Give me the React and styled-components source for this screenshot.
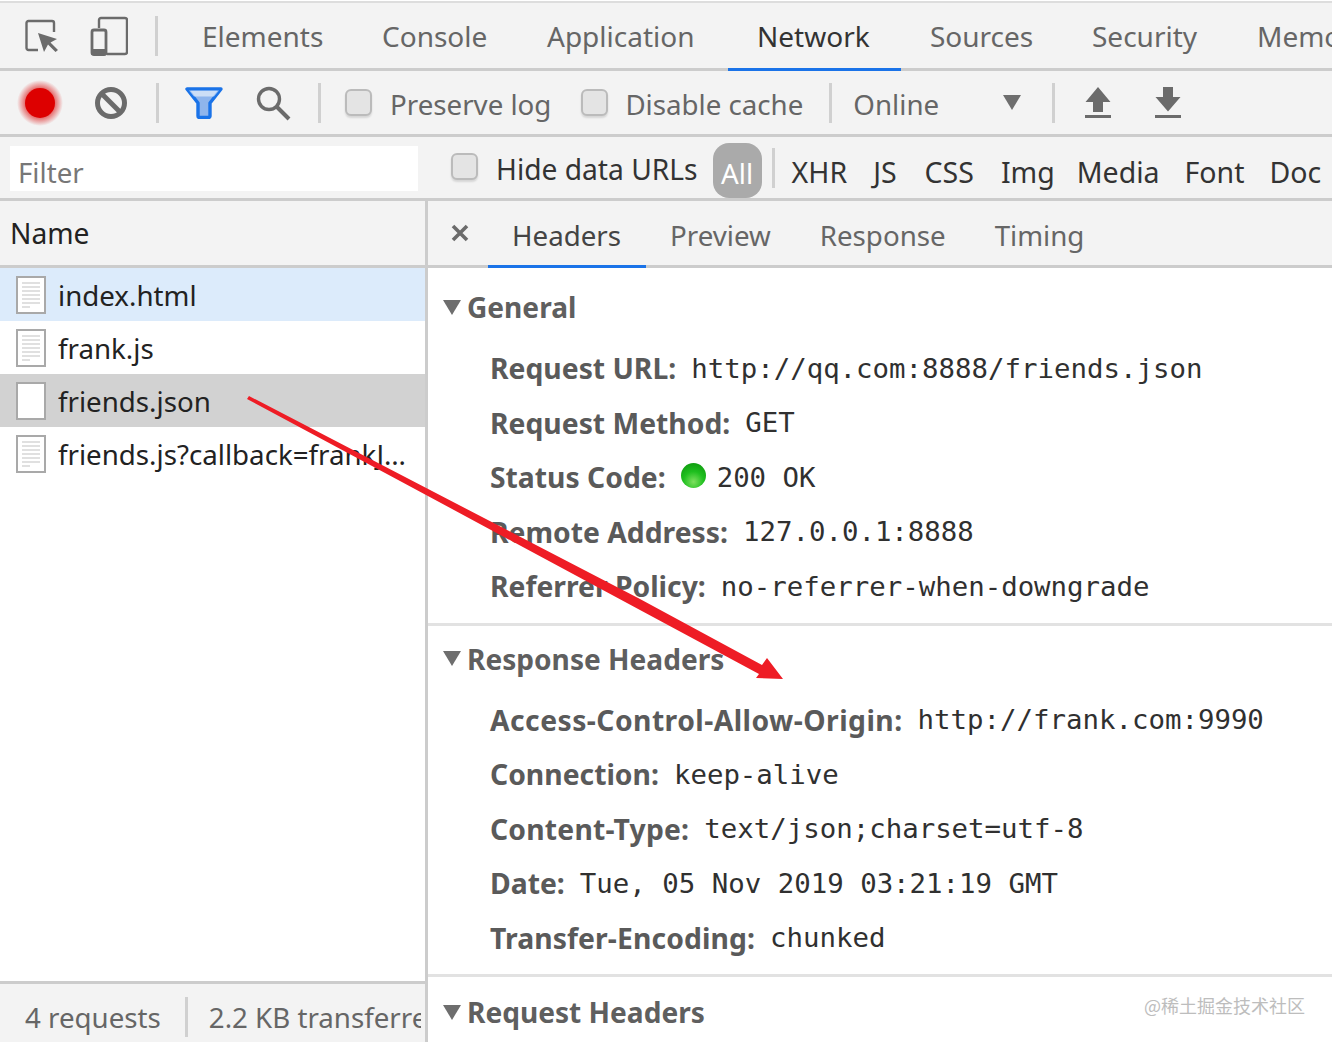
import React from "react";
import styled, { createGlobalStyle } from "styled-components";

const Global = createGlobalStyle`
  html, body {
    margin: 0;
    padding: 0;
    background: #fff;
    overflow: hidden;
  }
`;

const Page = styled.div`
  position: relative;
  width: 1332px;
  height: 1042px;
  overflow: hidden;
  display: flex;
  flex-direction: column;
  font-family: "Noto Sans", "Open Sans", sans-serif;
  font-size: 27.7px;
  color: #555;
`;

const Bar = styled.div`
  flex: none;
  display: flex;
  align-items: center;
  height: ${(p) => p.$h}px;
  background: #f3f3f3;
  border-bottom: 3px solid #ccc;
  white-space: nowrap;
`;

const TopBar = styled(Bar)`
  align-items: stretch;
  margin-top: 1px;
  border-top: 2px solid #ddd;
`;

const Slot = styled.div`
  flex: none;
  width: ${(p) => p.$w}px;
  margin-left: ${(p) => p.$l || 0}px;
  display: flex;
  justify-content: center;
  align-items: center;
`;

const Sep = styled.div`
  flex: none;
  width: 3px;
  height: 40px;
  margin-left: ${(p) => p.$l || 0}px;
  background: #d0d0d0;
`;

const MainTab = styled.div`
  flex: none;
  box-sizing: border-box;
  width: ${(p) => p.$w}px;
  display: flex;
  align-items: center;
  padding-left: 29px;
  margin-left: ${(p) => p.$l || 0}px;
  font-size: 28px;
  color: ${(p) => (p.$active ? "#333" : "#666")};
  box-shadow: ${(p) => (p.$active ? "0 3px 0 #1a73e8" : "none")};
`;

const Check = styled.span`
  flex: none;
  box-sizing: border-box;
  width: 27px;
  height: 27px;
  margin-left: ${(p) => p.$l || 0}px;
  border: 2px solid #bbb;
  border-radius: 6px;
  background: #e4e4e4;
  box-shadow: 0 2px 2px rgba(0, 0, 0, 0.12);
`;

const Label = styled.span`
  flex: none;
  margin-left: ${(p) => p.$l || 0}px;
  padding-top: ${(p) => p.$pt || 0}px;
  color: ${(p) => p.$color || "#666"};
`;

const Caret = styled.span`
  flex: none;
  width: 0;
  height: 0;
  margin-left: ${(p) => p.$l || 0}px;
  border-left: 9px solid transparent;
  border-right: 9px solid transparent;
  border-top: 15px solid #6e6e6e;
`;

const FilterBox = styled.div`
  flex: none;
  box-sizing: border-box;
  width: 408px;
  height: 45px;
  margin: 2px 0 0 10px;
  padding: 6px 0 0 8px;
  display: flex;
  align-items: center;
  background: #fff;
  color: #777;
`;

const Pill = styled.div`
  flex: none;
  box-sizing: border-box;
  width: 49px;
  height: 55px;
  margin: 6px 0 0 15px;
  display: flex;
  align-items: center;
  justify-content: center;
  padding-top: 5px;
  background: #aaa;
  border-radius: 16px;
  color: #fff;
`;

const TypeLabel = styled(Label)`
  font-size: 28.5px;
  color: #333;
  padding-top: 8px;
`;

const HideLabel = styled(Label)`
  font-size: 28.2px;
  color: #333;
  margin-top: 2px;
`;

const HideCheck = styled(Check)`
  margin-top: -2px;
`;

const Body = styled.div`
  flex: 1;
  min-height: 0;
  display: flex;
`;

const LeftPane = styled.div`
  flex: none;
  width: 425px;
  display: flex;
  flex-direction: column;
  border-right: 3px solid #ccc;
`;

const NameHead = styled.div`
  flex: none;
  height: 64px;
  padding-left: 10px;
  display: flex;
  align-items: center;
  background: #f3f3f3;
  border-bottom: 3px solid #ccc;
  font-size: 28.2px;
  color: #222;
`;

const Requests = styled.div`
  flex: 1;
`;

const Request = styled.div`
  height: 53px;
  display: flex;
  align-items: center;
  padding-left: 16px;
  gap: 12px;
  color: #222;
  background: ${(p) => p.$bg || "#fff"};
`;

const FileName = styled.span`
  flex: none;
  width: 356px;
  overflow: hidden;
  white-space: nowrap;
  text-overflow: ellipsis;
`;

const StatusBar = styled.div`
  flex: none;
  height: 61px;
  padding-top: 7px;
  box-sizing: border-box;
  display: flex;
  align-items: center;
  background: #f3f3f3;
  border-top: 3px solid #ccc;
  overflow: hidden;
  white-space: nowrap;
  color: #666;
`;

const StatusText = styled.span`
  flex: none;
  margin-left: ${(p) => p.$l}px;
`;

const ClipText = styled.span`
  flex: none;
  width: 212px;
  margin-left: 21px;
  overflow: hidden;
`;

const RightPane = styled.div`
  flex: 1;
  min-width: 0;
  display: flex;
  flex-direction: column;
`;

const DetailTabs = styled.div`
  flex: none;
  height: 64px;
  display: flex;
  align-items: stretch;
  background: #f3f3f3;
  border-bottom: 3px solid #ccc;
  white-space: nowrap;
`;

const Close = styled.div`
  flex: none;
  width: 60px;
  box-sizing: border-box;
  padding-left: 4px;
  display: flex;
  align-items: center;
  justify-content: center;
  margin-top: -1px;
`;

const DetailTab = styled.div`
  flex: none;
  display: flex;
  align-items: center;
  padding: 3px 25px 0 24px;
  color: ${(p) => (p.$active ? "#444" : "#666")};
  box-shadow: ${(p) => (p.$active ? "0 3px 0 #1a73e8" : "none")};
`;

const Section = styled.section`
  padding: ${(p) => p.$pt}px 0 9px 15px;
  border-bottom: ${(p) => (p.$last ? "none" : "3px solid #e2e2e2")};
`;

const SectionTitle = styled.h3`
  margin: 0;
  height: 40px;
  display: flex;
  align-items: center;
  gap: 6px;
  font-size: 28.1px;
  font-weight: 700;
  color: #5f5f5f;
`;

const Rows = styled.div`
  margin-top: 14px;
  padding-left: 47px;
`;

const Row = styled.div`
  height: 54.5px;
  display: flex;
  align-items: center;
  white-space: nowrap;
`;

const Key = styled.span`
  font-size: 28.3px;
  font-weight: 700;
  letter-spacing: ${(p) => p.$track || 0}px;
  color: #5a5a5a;
  margin-right: 15px;
`;

const Value = styled.span`
  font-family: "DejaVu Sans Mono", "Liberation Mono", monospace;
  font-size: 27.4px;
  color: #303030;
`;

const Dot = styled.span`
  flex: none;
  width: 25px;
  height: 25px;
  margin: -4px 11px 0 0;
  border-radius: 50%;
  background: radial-gradient(circle at 50% 75%, #7ee05f 0%, #1fbf1f 45%, #0a8f0a 100%);
`;

const Arrow = styled.svg`
  position: absolute;
  left: 0;
  top: 0;
  pointer-events: none;
`;

const Watermark = styled.div`
  position: absolute;
  right: 27px;
  top: 992px;
  font-family: "Noto Sans CJK SC", "Noto Sans", sans-serif;
  font-size: 18px;
  line-height: 26px;
  color: #bdbdbd;
`;

const InspectIcon = () => (
  <svg width="34" height="34" viewBox="0 0 34 34" fill="none">
    <path d="M13 31H3.500a2 2 0 0 1-2-2V4a2 2 0 0 1 2-2H27a2 2 0 0 1 2 2v9" stroke="#6b6b6b" strokeWidth="2.4" />
    <path d="M13 14L32 20L25.500 23.500L33 31L30.500 33L23 25.500L19 33z" fill="#6b6b6b" />
  </svg>
);

const DeviceIcon = () => (
  <svg width="38" height="40" viewBox="0 0 38 40" fill="none">
    <path d="M9 12V4a2 2 0 0 1 2-2h24a2 2 0 0 1 2 2v32a2 2 0 0 1-2 2H17" stroke="#6b6b6b" strokeWidth="2.400" />
    <rect x="2" y="14" width="14" height="24.500" rx="2" stroke="#6b6b6b" strokeWidth="2.800" />
    <rect x="1" y="33" width="16" height="6" rx="1" fill="#6b6b6b" />
  </svg>
);

const RecordIcon = () => (
  <svg width="48" height="48" viewBox="0 0 48 48">
    <defs>
      <radialGradient id="glow">
        <stop offset="62%" stopColor="#e04040" stopOpacity="0.8" />
        <stop offset="100%" stopColor="#e04040" stopOpacity="0" />
      </radialGradient>
    </defs>
    <circle cx="24" cy="24" r="23" fill="url(#glow)" />
    <circle cx="24" cy="24" r="15" fill="#dd0000" />
  </svg>
);

const ClearIcon = () => (
  <svg width="34" height="34" viewBox="0 0 34 34" fill="none" stroke="#6b6b6b" strokeWidth="5">
    <circle cx="17" cy="17" r="13.5" />
    <path d="M7.5 7.5l19 19" />
  </svg>
);

const FunnelIcon = () => (
  <svg width="38" height="32" viewBox="0 0 38 32">
    <path d="M2 2h34L25 16v13a1.500 1.500 0 0 1-1.500 1.500h-9A1.500 1.500 0 0 1 13 29V16z" fill="#8fb5ec" stroke="#1a73e8" strokeWidth="3.4" strokeLinejoin="round" />
    <path d="M4 3.500h30l-5 6H9z" fill="#fff" opacity="0.55" />
  </svg>
);

const SearchIcon = () => (
  <svg width="36" height="36" viewBox="0 0 36 36" fill="none" stroke="#6b6b6b">
    <circle cx="14" cy="14" r="10.5" strokeWidth="3.400" />
    <path d="M21.500 21.500L34 34" strokeWidth="4" />
  </svg>
);

const UpIcon = () => (
  <svg width="26" height="31" viewBox="0 0 26 31" fill="#6b6b6b">
    <path d="M13 0L25.500 15H18V25H8V15H0.500z" />
    <rect x="0" y="28" width="26" height="3" />
  </svg>
);

const DownIcon = () => (
  <svg width="26" height="31" viewBox="0 0 26 31" fill="#6b6b6b">
    <path d="M8 0H18V10H25.500L13 24.500L0.500 10H8z" />
    <rect x="0" y="28" width="26" height="3" />
  </svg>
);

const CloseIcon = () => (
  <svg width="18" height="18" viewBox="0 0 18 18" stroke="#6b6b6b" strokeWidth="3.600">
    <path d="M2 2l14 14M16 2L2 16" />
  </svg>
);

const FileIcon = ({ blank }) => (
  <svg width="30" height="38" viewBox="0 0 30 38">
    <rect x="1" y="1" width="28" height="36" fill="#fff" stroke="#a9a9a9" strokeWidth="2" />
    {!blank &&
      [7, 11, 15, 19, 23, 27, 31].map((y, i) => (
        <path key={y} d={`M6 ${y}H${i === 6 ? 14 : 24}`} stroke="#e0e0e0" strokeWidth="2" />
      ))}
  </svg>
);

const mainTabs = [
  ["Elements", 180],
  ["Console", 165],
  ["Application", 210],
  ["Network", 173],
  ["Sources", 162],
  ["Security", 165],
  ["Memory", 160],
];
const typeFilters = [
  ["XHR", 17],
  ["JS", 26],
  ["CSS", 28],
  ["Img", 27],
  ["Media", 22],
  ["Font", 25],
  ["Doc", 25],
];
const requests = [
  { name: "index.html", bg: "#dcebfb" },
  { name: "frank.js" },
  { name: "friends.json", bg: "#d2d2d2", blank: true },
  { name: "friends.js?callback=frankJSONPCallback" },
];
const general = [
  { key: "Request URL:", value: "http://qq.com:8888/friends.json" },
  { key: "Request Method:", value: "GET" },
  { key: "Status Code:", value: "200 OK", ok: true },
  { key: "Remote Address:", value: "127.0.0.1:8888" },
  { key: "Referrer Policy:", value: "no-referrer-when-downgrade" },
];
const responseHeaders = [
  { key: "Access-Control-Allow-Origin:", value: "http://frank.com:9990", track: 0.45 },
  { key: "Connection:", value: "keep-alive" },
  { key: "Content-Type:", value: "text/json;charset=utf-8", track: 0.2 },
  { key: "Date:", value: "Tue, 05 Nov 2019 03:21:19 GMT" },
  { key: "Transfer-Encoding:", value: "chunked", track: 0.1 },
];

function HeaderRows({ rows }) {
  return (
    <Rows>
      {rows.map((row) => (
        <Row key={row.key}>
          <Key $track={row.track}>{row.key}</Key>
          {row.ok && <Dot />}
          <Value>{row.value}</Value>
        </Row>
      ))}
    </Rows>
  );
}

export default function App() {
  return (
    <Page>
      <Global />
      <TopBar $h={65}>
        <Slot $w={84}>
          <InspectIcon />
        </Slot>
        <Slot $w={50}>
          <DeviceIcon />
        </Slot>
        <Slot $w={3} $l={21}>
          <Sep />
        </Slot>
        {mainTabs.map(([tab, width], i) => (
          <MainTab key={tab} $w={width} $active={tab === "Network"} $l={i === 0 ? 15 : 0}>
            {tab}
          </MainTab>
        ))}
      </TopBar>

      <Bar $h={63}>
        <Slot $w={80}>
          <RecordIcon />
        </Slot>
        <Slot $w={62}>
          <ClearIcon />
        </Slot>
        <Sep $l={14} />
        <Slot $w={62} $l={14}>
          <FunnelIcon />
        </Slot>
        <Slot $w={76}>
          <SearchIcon />
        </Slot>
        <Sep $l={7} />
        <Check $l={24} />
        <Label $l={18} $pt={3}>
          Preserve log
        </Label>
        <Check $l={30} />
        <Label $l={17} $pt={3}>
          Disable cache
        </Label>
        <Sep $l={26} />
        <Label $l={21} $pt={3}>
          Online
        </Label>
        <Caret $l={64} />
        <Sep $l={31} />
        <Slot $w={26} $l={30}>
          <UpIcon />
        </Slot>
        <Slot $w={26} $l={44}>
          <DownIcon />
        </Slot>
      </Bar>

      <Bar $h={61}>
        <FilterBox>Filter</FilterBox>
        <HideCheck $l={33} />
        <HideLabel $l={18} $color="#333">
          Hide data URLs
        </HideLabel>
        <Pill>All</Pill>
        <Sep $l={10} />
        {typeFilters.map(([name, left]) => (
          <TypeLabel key={name} $l={left}>
            {name}
          </TypeLabel>
        ))}
      </Bar>

      <Body>
        <LeftPane>
          <NameHead>Name</NameHead>
          <Requests>
            {requests.map((r) => (
              <Request key={r.name} $bg={r.bg}>
                <FileIcon blank={r.blank} />
                <FileName>{r.name}</FileName>
              </Request>
            ))}
          </Requests>
          <StatusBar>
            <StatusText $l={25}>4 requests</StatusText>
            <Sep $l={24} />
            <ClipText>2.2 KB transferred</ClipText>
          </StatusBar>
        </LeftPane>

        <RightPane>
          <DetailTabs>
            <Close>
              <CloseIcon />
            </Close>
            <DetailTab $active>Headers</DetailTab>
            <DetailTab>Preview</DetailTab>
            <DetailTab>Response</DetailTab>
            <DetailTab>Timing</DetailTab>
          </DetailTabs>
          <Section $pt={19}>
            <SectionTitle>
              <Caret />
              General
            </SectionTitle>
            <HeaderRows rows={general} />
          </Section>
          <Section $pt={13}>
            <SectionTitle>
              <Caret />
              Response Headers
            </SectionTitle>
            <HeaderRows rows={responseHeaders} />
          </Section>
          <Section $pt={15} $last>
            <SectionTitle>
              <Caret />
              Request Headers
            </SectionTitle>
          </Section>
        </RightPane>
      </Body>

      <Arrow width="1332" height="1042" viewBox="0 0 1332 1042">
        <polygon
          points="249,396 640,599 762,665 767,658 783,679 756,678 759,674 640,610 400,481 247,399"
          fill="#ee1c25"
        />
      </Arrow>
      <Watermark>@稀土掘金技术社区</Watermark>
    </Page>
  );
}
